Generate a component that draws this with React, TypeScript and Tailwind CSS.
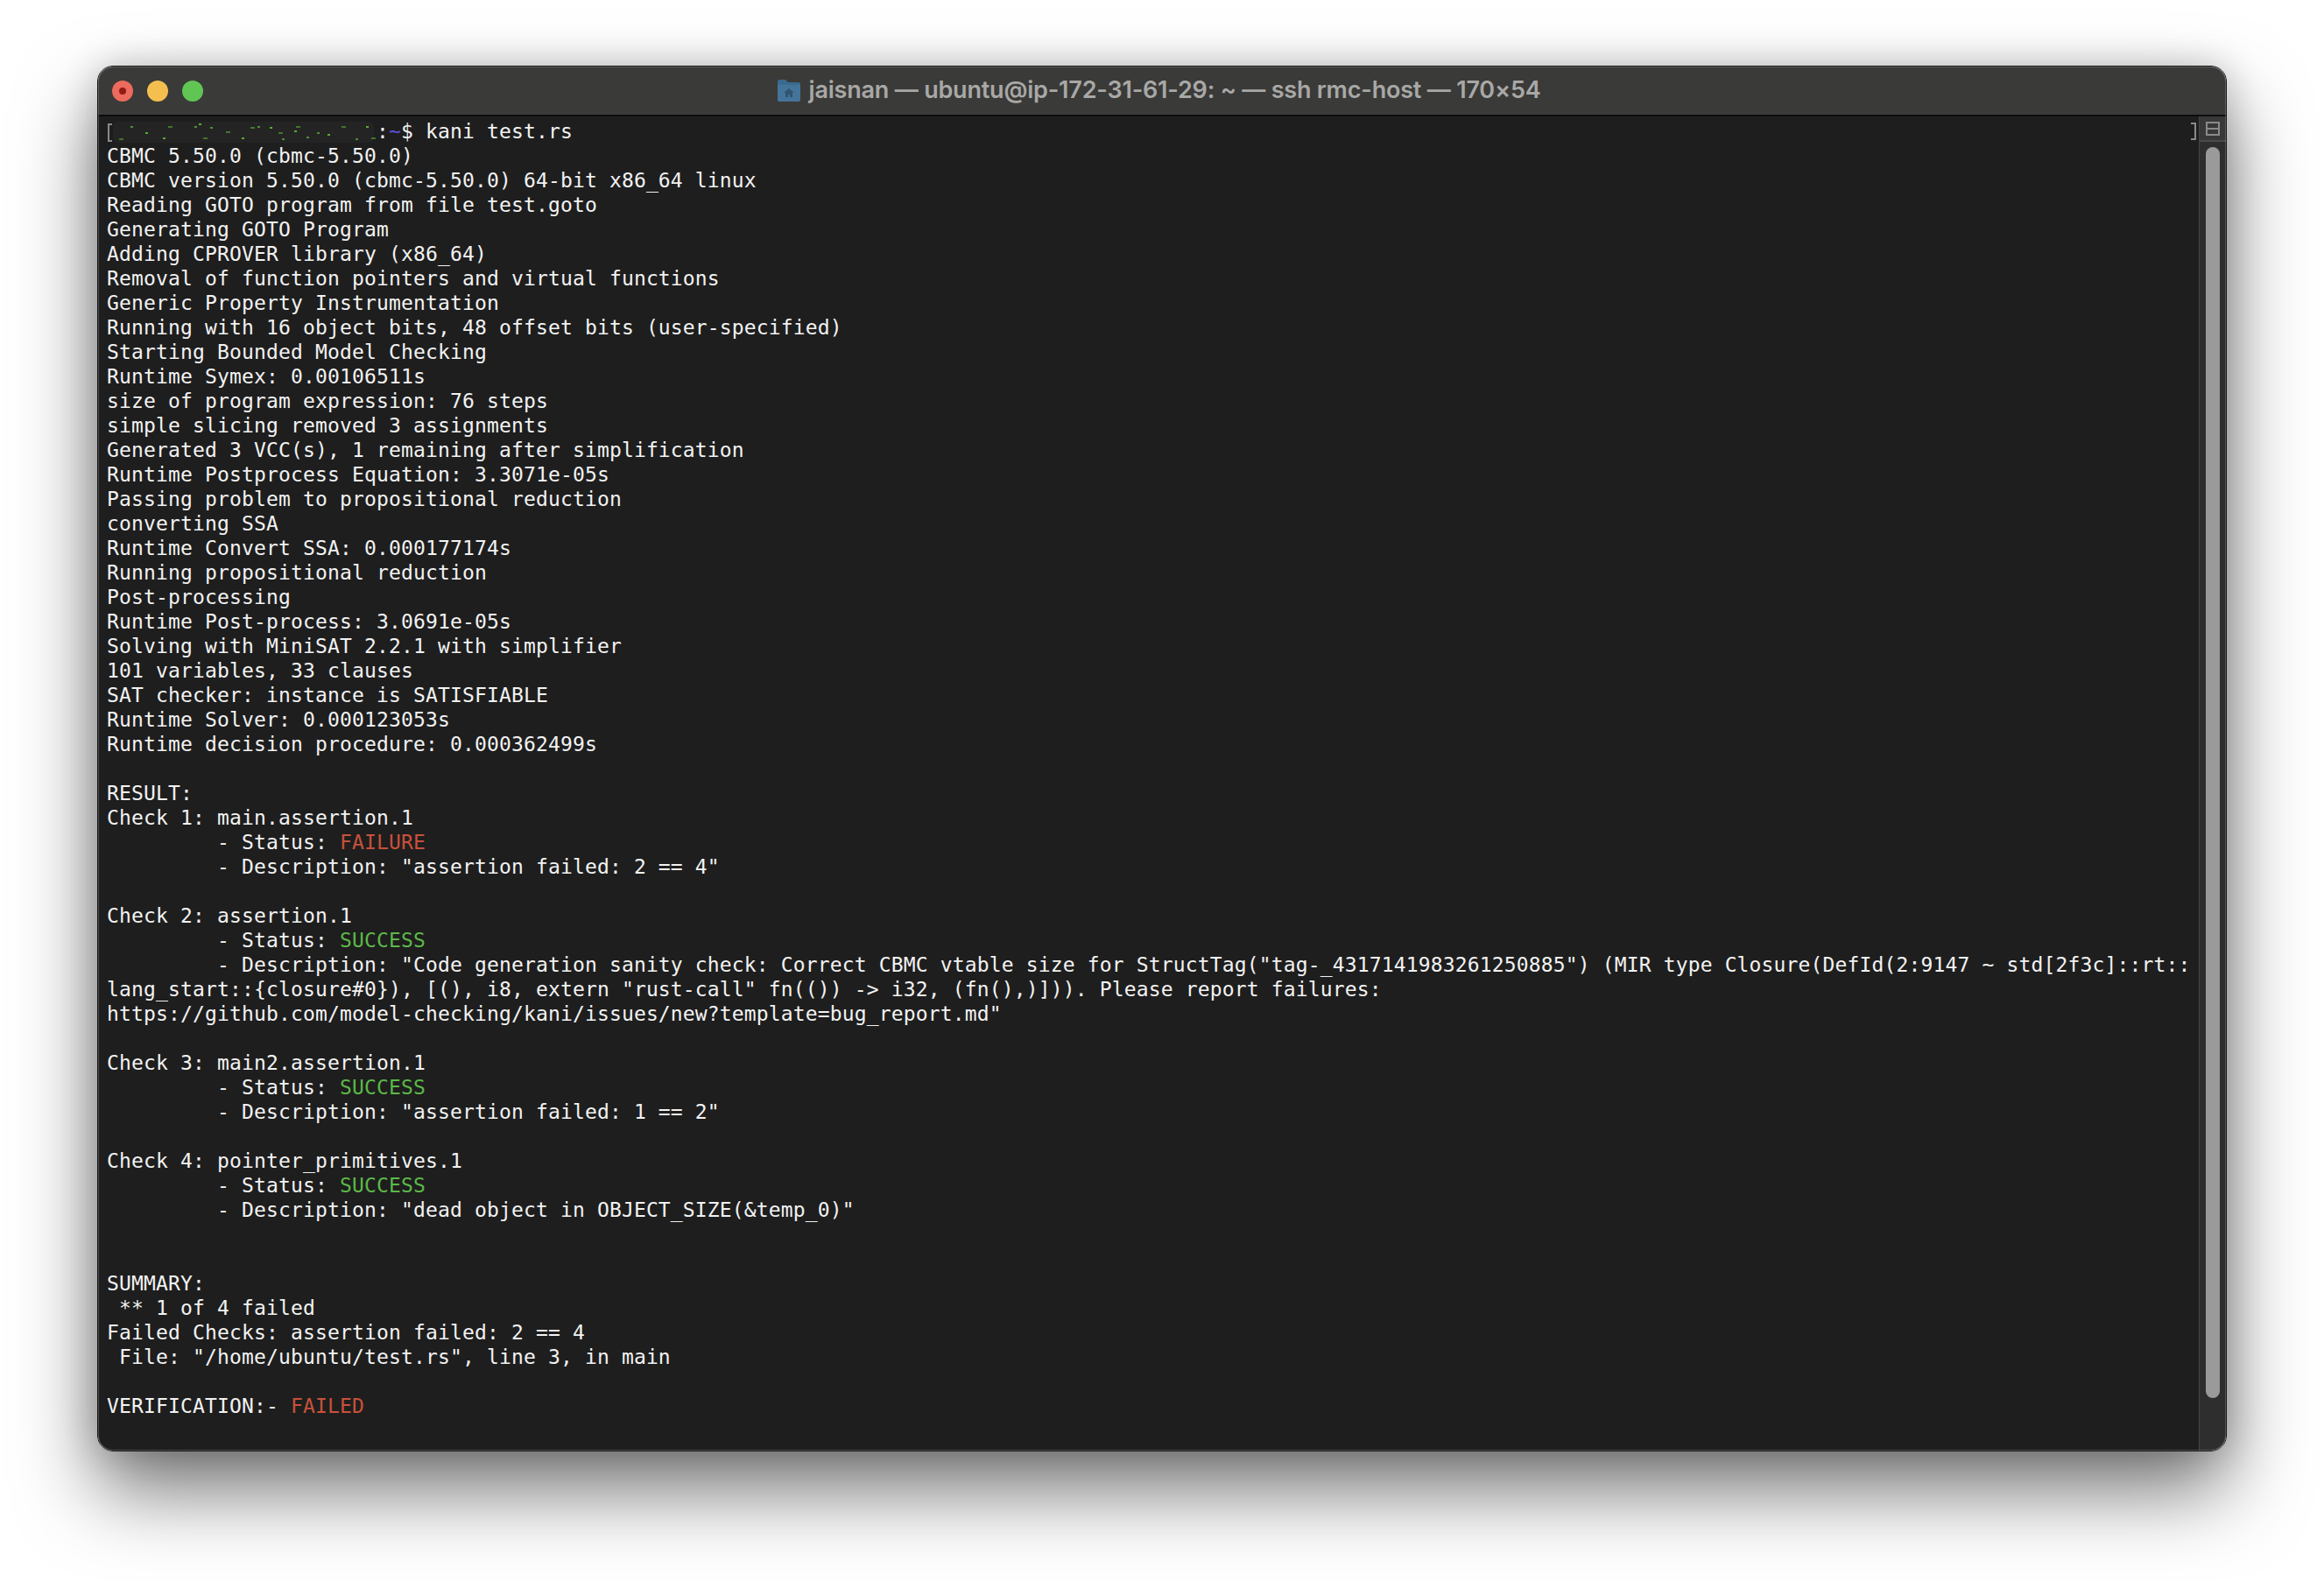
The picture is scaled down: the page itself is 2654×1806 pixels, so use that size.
const mono = "font-['DejaVu_Sans_Mono',monospace]";

type Seg = { t: string; c?: string };

const RED = "text-[#c8513a]";
const GREEN = "text-[#5cb848]";

const lines: (string | Seg[])[] = [
  "CBMC 5.50.0 (cbmc-5.50.0)",
  "CBMC version 5.50.0 (cbmc-5.50.0) 64-bit x86_64 linux",
  "Reading GOTO program from file test.goto",
  "Generating GOTO Program",
  "Adding CPROVER library (x86_64)",
  "Removal of function pointers and virtual functions",
  "Generic Property Instrumentation",
  "Running with 16 object bits, 48 offset bits (user-specified)",
  "Starting Bounded Model Checking",
  "Runtime Symex: 0.00106511s",
  "size of program expression: 76 steps",
  "simple slicing removed 3 assignments",
  "Generated 3 VCC(s), 1 remaining after simplification",
  "Runtime Postprocess Equation: 3.3071e-05s",
  "Passing problem to propositional reduction",
  "converting SSA",
  "Runtime Convert SSA: 0.000177174s",
  "Running propositional reduction",
  "Post-processing",
  "Runtime Post-process: 3.0691e-05s",
  "Solving with MiniSAT 2.2.1 with simplifier",
  "101 variables, 33 clauses",
  "SAT checker: instance is SATISFIABLE",
  "Runtime Solver: 0.000123053s",
  "Runtime decision procedure: 0.000362499s",
  "",
  "RESULT:",
  "Check 1: main.assertion.1",
  [{ t: "         - Status: " }, { t: "FAILURE", c: RED }],
  '         - Description: "assertion failed: 2 == 4"',
  "",
  "Check 2: assertion.1",
  [{ t: "         - Status: " }, { t: "SUCCESS", c: GREEN }],
  '         - Description: "Code generation sanity check: Correct CBMC vtable size for StructTag("tag-_4317141983261250885") (MIR type Closure(DefId(2:9147 ~ std[2f3c]::rt::',
  'lang_start::{closure#0}), [(), i8, extern "rust-call" fn(()) -> i32, (fn(),)])). Please report failures:',
  'https://github.com/model-checking/kani/issues/new?template=bug_report.md"',
  "",
  "Check 3: main2.assertion.1",
  [{ t: "         - Status: " }, { t: "SUCCESS", c: GREEN }],
  '         - Description: "assertion failed: 1 == 2"',
  "",
  "Check 4: pointer_primitives.1",
  [{ t: "         - Status: " }, { t: "SUCCESS", c: GREEN }],
  '         - Description: "dead object in OBJECT_SIZE(&temp_0)"',
  "",
  "",
  "SUMMARY:",
  " ** 1 of 4 failed",
  "Failed Checks: assertion failed: 2 == 4",
  ' File: "/home/ubuntu/test.rs", line 3, in main',
  "",
  [{ t: "VERIFICATION:- " }, { t: "FAILED", c: RED }],
];

function FolderIcon() {
  return (
    <svg width="28" height="27" viewBox="0 0 28 27" className="shrink-0">
      <path d="M1 3a2 2 0 0 1 2-2h7l3 3h12a2 2 0 0 1 2 2v18a2 2 0 0 1-2 2H3a2 2 0 0 1-2-2z" fill="#3b6a8f" />
      <path d="M1 7h26v17a2 2 0 0 1-2 2H3a2 2 0 0 1-2-2z" fill="#44749a" />
      <path d="M14 11l-6 5h2v5h3v-3h2v3h3v-5h2z" fill="#2f5573" />
    </svg>
  );
}

// redacted hostname in the prompt: smudge with some green specks left over
function RedactedPrompt() {
  const specks = [
    [14, 22], [27, 8], [64, 21], [70, 8], [100, 8], [105, 5], [110, 21], [118, 9], [154, 21], [164, 9],
    [172, 8], [186, 9], [196, 15], [200, 22], [214, 13], [216, 8], [240, 15], [252, 17], [268, 8],
    [284, 22], [296, 8], [302, 21], [310, 11], [44, 15], [136, 14], [228, 20],
  ];
  return (
    <span className="inline-block w-[308px] h-[28px] align-top">
      <svg width="308" height="28" viewBox="0 0 308 28">
        <rect x="7" y="3" width="298" height="24" rx="6" fill="#242424" />
        <path d="M6 6H2v19h4" stroke="#8a8a8a" strokeWidth="2" fill="none" />
        <g fill="#55ab38">
          {specks.map(([x, y], i) => (
            <rect key={i} x={x} y={y} width={i % 3 === 0 ? 5 : 3} height="2" opacity={0.6 + (i % 3) * 0.2} />
          ))}
        </g>
      </svg>
    </span>
  );
}

export default function App() {
  return (
    <div className="flex justify-center pt-[75px] h-[1806px] bg-white overflow-hidden">
      <div className="relative flex flex-col w-[2432px] h-[1583px] rounded-[18px] overflow-hidden border border-[#161616] shadow-[0_44px_90px_rgba(0,0,0,0.55),0_0_40px_rgba(0,0,0,0.18)]">
        {/* Title bar */}
        <div className="flex items-center h-[57px] shrink-0 bg-[#3a3a38] border-b-2 border-[#0e0e0e]">
          <div className="flex items-center gap-[16px] pl-[16px]">
            <span className="flex items-center justify-center w-[24px] h-[24px] rounded-full bg-[#ec6a5e]">
              <span className="w-[8px] h-[8px] rounded-full bg-[#8f1d12]" />
            </span>
            <span className="w-[24px] h-[24px] rounded-full bg-[#f4bf4f]" />
            <span className="w-[24px] h-[24px] rounded-full bg-[#61c554]" />
          </div>
          <div className="flex-1 flex items-center justify-center gap-[9px] pr-[128px] font-['Inter',sans-serif] font-semibold text-[27px] tracking-[-0.2px] text-[#a8a8a6] whitespace-pre">
            <FolderIcon />
            <span>jaisnan — ubuntu@ip-172-31-61-29: ~ — ssh rmc-host — 170×54</span>
          </div>
        </div>

        <div className="flex flex-1 min-h-0">
          {/* Terminal output */}
          <div className={`flex-1 relative bg-[#1e1e1e] pl-[10px] pt-[3px] text-[23px] tracking-[0.15px] leading-[28px] text-[#f2f2f2] whitespace-pre ${mono}`}>
            <div className="h-[28px]">
              <RedactedPrompt />
              <span>:</span>
              <span className="text-[#5b4fd8]">~</span>
              <span>$ kani test.rs</span>
            </div>
            {lines.map((line, i) => (
              <div key={i} className="h-[28px]">
                {typeof line === "string"
                  ? line
                  : line.map((s, j) => (
                      <span key={j} className={s.c}>
                        {s.t}
                      </span>
                    ))}
              </div>
            ))}
            <svg width="6" height="20" viewBox="0 0 6 20" className="absolute top-[7px] right-[3px]">
              <path d="M0 1h5v18H0" stroke="#8a8a8a" strokeWidth="2" fill="none" />
            </svg>
          </div>

          {/* Scrollbar column */}
          <div className="flex flex-col w-[31px] shrink-0 bg-[#2e2e2e] border-l border-[#444]">
            <div className="flex items-center justify-center h-[29px] shrink-0 border-b-2 border-[#4c4c4c] bg-[#383838]">
              <span className="flex flex-col w-[16px] h-[16px] border-2 border-[#8a8a8a]">
                <span className="w-full h-[5px] border-b-2 border-[#8a8a8a] box-content" />
              </span>
            </div>
            <div className="flex-1 flex justify-center pt-[6px] pb-[60px]">
              <div className="w-[16px] rounded-full bg-[#9a9a9a]" />
            </div>
          </div>
        </div>

        {/* inner highlight along the window edge */}
        <div className="absolute inset-0 rounded-[17px] pointer-events-none shadow-[inset_0_0_0_1px_rgba(255,255,255,0.2)]" />
      </div>
    </div>
  );
}
